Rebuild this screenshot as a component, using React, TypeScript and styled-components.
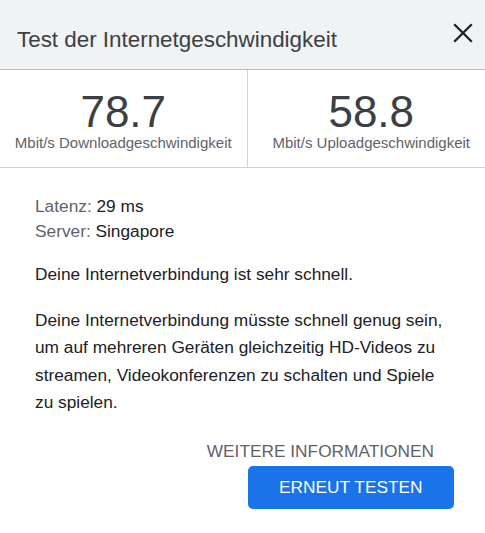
import React from 'react'
import styled, { createGlobalStyle } from 'styled-components'

const GlobalStyle = createGlobalStyle`
  html, body {
    margin: 0;
    padding: 0;
    background: #ffffff;
    overflow: hidden;
  }
  body {
    font-family: "Liberation Sans", Arial, sans-serif;
  }
`

const Dialog = styled.div`
  width: 495px;
  background: #ffffff;
`

const Header = styled.div`
  height: 69px;
  display: flex;
  justify-content: space-between;
  align-items: flex-start;
  padding: 0 17px 0 17px;
  background: #f1f2f4;
  border-bottom: 1px solid #bdbdbd;
`

const Title = styled.h1`
  margin: 27px 0 0;
  font-size: 22.4px;
  font-weight: 400;
  line-height: 25px;
  color: #3c4043;
`

const CloseButton = styled.button`
  margin-top: 18px;
  padding: 0;
  width: 30px;
  height: 30px;
  border: 0;
  background: transparent;
  display: flex;
  cursor: pointer;
`

const Stats = styled.div`
  display: grid;
  grid-template-columns: 1fr 1fr;
  border-bottom: 1px solid #d3d3d3;
`

const Stat = styled.div<{ $divider?: boolean }>`
  display: flex;
  flex-direction: column;
  align-items: center;
  padding: 20px 0 16px;
  border-right: ${(p) => (p.$divider ? '1px solid #d3d3d3' : 'none')};
`

const Value = styled.div`
  font-size: 44px;
  line-height: 44px;
  color: #3c4043;
`

const Unit = styled.div`
  font-size: 15px;
  line-height: 17px;
  color: #5f6368;
`

const Body = styled.div`
  padding: 26px 45px 0 35px;
  font-size: 17.3px;
  color: #202124;
`

const Info = styled.div`
  line-height: 25px;
`

const InfoLabel = styled.span`
  color: #5f6368;
`

const Paragraph = styled.p<{ $gap: number }>`
  margin: ${(p) => p.$gap}px 0 0;
  line-height: 27.5px;
`

const Footer = styled.div`
  display: flex;
  flex-direction: column;
  align-items: flex-end;
  padding-right: 41px;
  margin-top: 24px;
`

const MoreLink = styled.a`
  padding: 0 20px;
  font-size: 17.3px;
  line-height: 20px;
  color: #5f6368;
  text-decoration: none;
  text-transform: uppercase;
  margin-bottom: 5px;
  cursor: pointer;
`

const RetryButton = styled.button`
  height: 43px;
  padding: 0 31.5px;
  border: 0;
  border-radius: 5px;
  background: #1a73e8;
  color: #ffffff;
  font-family: inherit;
  font-size: 17.3px;
  text-transform: uppercase;
  cursor: pointer;
`

const stats = [
  { value: '78.7', unit: 'Mbit/s Downloadgeschwindigkeit' },
  { value: '58.8', unit: 'Mbit/s Uploadgeschwindigkeit' },
]

export default function App() {
  return (
    <>
      <GlobalStyle />
      <Dialog>
        <Header>
          <Title>Test der Internetgeschwindigkeit</Title>
          <CloseButton aria-label="Schließen">
            <svg width="30" height="30" viewBox="0 0 30 30">
              <path d="M6.2 6.2 L23.8 23.8 M23.8 6.2 L6.2 23.8" stroke="#202124" strokeWidth="2.3" />
            </svg>
          </CloseButton>
        </Header>
        <Stats>
          {stats.map((s, i) => (
            <Stat key={s.unit} $divider={i === 0}>
              <Value>{s.value}</Value>
              <Unit>{s.unit}</Unit>
            </Stat>
          ))}
        </Stats>
        <Body>
          <Info>
            <div>
              <InfoLabel>Latenz:</InfoLabel> 29 ms
            </div>
            <div>
              <InfoLabel>Server:</InfoLabel> Singapore
            </div>
          </Info>
          <Paragraph $gap={17}>Deine Internetverbindung ist sehr schnell.</Paragraph>
          <Paragraph $gap={18}>
            Deine Internetverbindung müsste schnell genug sein, um auf mehreren Geräten
            gleichzeitig HD-Videos zu streamen, Videokonferenzen zu schalten und Spiele zu
            spielen.
          </Paragraph>
        </Body>
        <Footer>
          <MoreLink>Weitere Informationen</MoreLink>
          <RetryButton>Erneut testen</RetryButton>
        </Footer>
      </Dialog>
    </>
  )
}
